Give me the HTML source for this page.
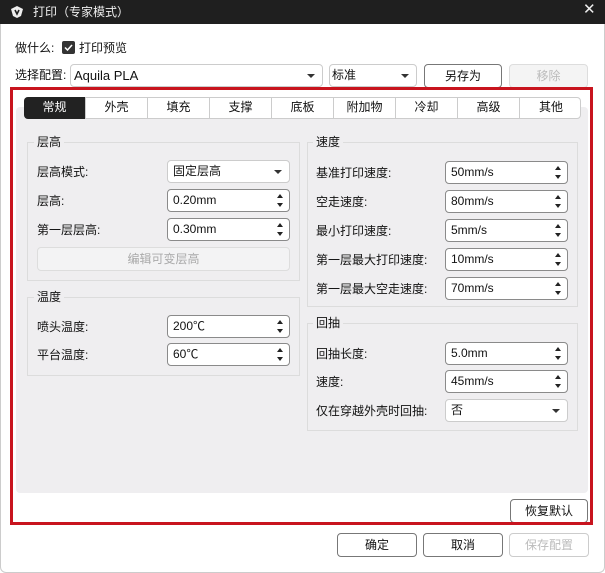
<!DOCTYPE html>
<html><head><meta charset="utf-8"><style>
*{box-sizing:border-box;margin:0;padding:0}
body{width:605px;height:573px;background:#fff;font-family:"Liberation Sans","Noto Sans CJK SC",sans-serif;font-size:12px;color:#111;position:relative;overflow:hidden}
.a{position:absolute}
.lbl{position:absolute;font-size:12px;line-height:14px}
.in{position:absolute;height:23px;border:1px solid #8a8a8a;border-radius:4px;background:#fff;padding-left:5px;line-height:21px;font-size:12px}
.sp::after{content:"";position:absolute;right:6px;top:4px;border:3px solid transparent;border-bottom:4px solid #222;border-top:0}
.sp::before{content:"";position:absolute;right:6px;bottom:4px;border:3px solid transparent;border-top:4px solid #222;border-bottom:0}
.dd::after{content:"";position:absolute;right:7px;top:9px;border:4px solid transparent;border-top:4px solid #333;border-bottom:0}
.grp{position:absolute;border:1px solid #dcdcdc;background:#efeef0}
.gt{position:absolute;background:#efeef0;padding:0 3px;font-size:12px;line-height:14px}
.btn{position:absolute;height:24px;border:1px solid #777;border-radius:4px;background:#fff;text-align:center;line-height:22px;font-size:12px}
.tab{position:absolute;top:97px;height:22px;width:62px;border-right:1px solid #ccc;text-align:center;line-height:21px;font-size:12px}
</style></head><body>
<div class="a" style="left:0;top:0;width:605px;height:24px;background:#1f1f1f"></div>
<svg class="a" style="left:10px;top:5px" width="14" height="14" viewBox="0 0 14 14"><path d="M7 1 L13 4 L11 11 L7 13 L3 11 L1 4 Z" fill="#eee"/><path d="M5 5 L7 9 L9 5" stroke="#1f1f1f" stroke-width="1.6" fill="none"/></svg>
<div class="lbl" style="left:33px;top:5px;color:#eee;font-size:12px">打印（专家模式）</div>
<div class="lbl" style="left:583px;top:3px;color:#eee;font-size:15px">✕</div>

<div class="lbl" style="left:15px;top:41px">做什么:</div>
<div class="a" style="left:62px;top:41px;width:13px;height:13px;background:#333;border-radius:2px"><svg width="13" height="13"><path d="M3 6.5 L5.5 9 L10 4" stroke="#fff" stroke-width="1.5" fill="none"/></svg></div>
<div class="lbl" style="left:79px;top:41px">打印预览</div>

<div class="lbl" style="left:15px;top:68px">选择配置:</div>
<div class="in dd" style="left:70px;top:64px;width:253px;border-color:#ccc;font-size:13px;padding-left:3px">Aquila PLA</div>
<div class="in dd" style="left:329px;top:64px;width:88px;border-color:#ccc;padding-left:2px">标准</div>
<div class="btn" style="left:424px;top:64px;width:78px">另存为</div>
<div class="btn" style="left:509px;top:64px;width:79px;border-color:#ddd;color:#bbb;background:#f4f4f4">移除</div>

<div class="a" style="left:16px;top:107px;width:572px;height:386px;background:#efeef0;border-radius:4px"></div>
<div class="a" style="left:24px;top:97px;width:557px;height:22px;border:1px solid #ccc;border-radius:4px;background:#fff;overflow:hidden"></div>
<div class="tab" style="left:24px;background:#222;color:#fff;border-radius:4px 0 0 4px">常规</div>
<div class="tab" style="left:86px">外壳</div>
<div class="tab" style="left:148px">填充</div>
<div class="tab" style="left:210px">支撑</div>
<div class="tab" style="left:272px">底板</div>
<div class="tab" style="left:334px">附加物</div>
<div class="tab" style="left:396px">冷却</div>
<div class="tab" style="left:458px">高级</div>
<div class="tab" style="left:520px;border-right:0">其他</div>

<div class="grp" style="left:27px;top:142px;width:273px;height:139px"></div><div class="gt" style="left:34px;top:135px">层高</div>
<div class="lbl" style="left:37px;top:165px">层高模式:</div><div class="in dd" style="left:167px;top:160px;width:123px;border-color:#ccc">固定层高</div>
<div class="lbl" style="left:37px;top:194px">层高:</div><div class="in sp" style="left:167px;top:189px;width:123px">0.20mm</div>
<div class="lbl" style="left:37px;top:223px">第一层层高:</div><div class="in sp" style="left:167px;top:218px;width:123px">0.30mm</div>
<div class="btn" style="left:37px;top:247px;width:253px;border-color:#ddd;color:#aaa;background:#f3f3f4">编辑可变层高</div>

<div class="grp" style="left:27px;top:297px;width:273px;height:79px"></div><div class="gt" style="left:34px;top:290px">温度</div>
<div class="lbl" style="left:37px;top:320px">喷头温度:</div><div class="in sp" style="left:167px;top:315px;width:123px">200℃</div>
<div class="lbl" style="left:37px;top:348px">平台温度:</div><div class="in sp" style="left:167px;top:343px;width:123px">60℃</div>

<div class="grp" style="left:307px;top:142px;width:271px;height:165px"></div><div class="gt" style="left:313px;top:135px">速度</div>
<div class="lbl" style="left:316px;top:166px">基准打印速度:</div><div class="in sp" style="left:445px;top:161px;width:123px">50mm/s</div>
<div class="lbl" style="left:316px;top:195px">空走速度:</div><div class="in sp" style="left:445px;top:190px;width:123px">80mm/s</div>
<div class="lbl" style="left:316px;top:224px">最小打印速度:</div><div class="in sp" style="left:445px;top:219px;width:123px">5mm/s</div>
<div class="lbl" style="left:316px;top:253px">第一层最大打印速度:</div><div class="in sp" style="left:445px;top:248px;width:123px">10mm/s</div>
<div class="lbl" style="left:316px;top:282px">第一层最大空走速度:</div><div class="in sp" style="left:445px;top:277px;width:123px">70mm/s</div>

<div class="grp" style="left:307px;top:323px;width:271px;height:108px"></div><div class="gt" style="left:313px;top:316px">回抽</div>
<div class="lbl" style="left:316px;top:347px">回抽长度:</div><div class="in sp" style="left:445px;top:342px;width:123px">5.0mm</div>
<div class="lbl" style="left:316px;top:375px">速度:</div><div class="in sp" style="left:445px;top:370px;width:123px">45mm/s</div>
<div class="lbl" style="left:316px;top:404px">仅在穿越外壳时回抽:</div><div class="in dd" style="left:445px;top:399px;width:123px;border-color:#ccc">否</div>

<div class="btn" style="left:510px;top:499px;width:78px">恢复默认</div>
<div class="a" style="left:10px;top:87px;width:583px;height:438px;border:3px solid #c8141e"></div>

<div class="btn" style="left:337px;top:533px;width:80px">确定</div>
<div class="btn" style="left:423px;top:533px;width:80px">取消</div>
<div class="btn" style="left:509px;top:533px;width:80px;border-color:#ccc;color:#bbb">保存配置</div>
<div class="a" style="left:0;top:24px;width:605px;height:549px;border:1px solid #ccc;border-top:0;border-radius:0 0 6px 6px"></div>
</body></html>
